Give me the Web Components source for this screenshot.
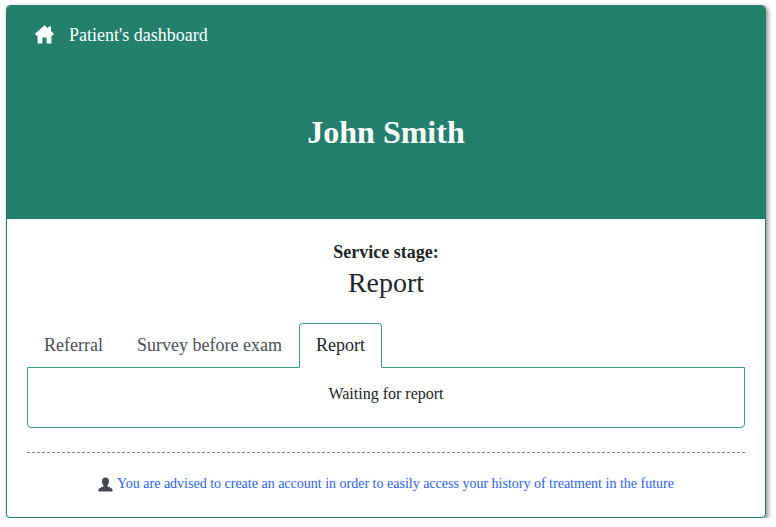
<!DOCTYPE html>
<html>
<head>
<meta charset="utf-8">
<style>
    html, body { margin: 0; background: #fff; }
    body { padding: 5px 10px 0 6px; font-family: "Liberation Serif", "Times New Roman", serif; color: #212529; }
</style>
</head>
<body>
<patient-dashboard>
    <dashboard-header slot="header" title-text="Patient's dashboard">John Smith</dashboard-header>
    <service-stage slot="stage" label="Service stage:">Report</service-stage>
    <stage-tabs slot="tabs" active="Report" items="Referral|Survey before exam|Report">Waiting for report</stage-tabs>
    <account-note slot="note">You are advised to create an account in order to easily access your history of treatment in the future</account-note>
</patient-dashboard>

<script>
class PatientDashboard extends HTMLElement {
    constructor() {
        super();
        this.attachShadow({ mode: 'open' });
    }

    static get styles() {
        return `
            :host {
                display: block;
                height: 513px;
                box-sizing: border-box;
                border: 1px solid #22806d;
                border-radius: 4px;
                background: #fff;
                box-shadow: 2px 2px 5px rgba(0, 0, 0, .45);
                overflow: hidden;
            }
            .body {
                padding: 21px 20px 0;
            }
        `;
    }

    connectedCallback() {
        this.shadowRoot.innerHTML = /* html */`
        <style>${PatientDashboard.styles}</style>
        <slot name="header"></slot>
        <div class="body">
            <slot name="stage"></slot>
            <slot name="tabs"></slot>
            <slot name="note"></slot>
        </div>
        `;
    }
}

class DashboardHeader extends HTMLElement {
    constructor() {
        super();
        this.attachShadow({ mode: 'open' });
    }

    static get styles() {
        return `
            :host {
                display: block;
                height: 213px;
                background: #22806d;
                color: #fff;
            }
            .nav {
                display: flex;
                align-items: center;
                gap: 15px;
                height: 58px;
                padding-left: 28px;
                font-size: 18px;
            }
            svg { width: 19px; height: 19px; display: block; fill: #fff; margin-top: -2px; }
            h1 {
                margin: 49px 0 0;
                text-align: center;
                font-size: 32px;
                line-height: 38px;
                font-weight: 700;
            }
        `;
    }

    connectedCallback() {
        this.shadowRoot.innerHTML = /* html */`
        <style>${DashboardHeader.styles}</style>
        <div class="nav">
            <svg viewBox="0 0 19 19"><path d="M9.5 .3 13.2 3.5V1.6H16V6L19 8.8 17.9 10.4H16.4V18.6H11.6V12.4H7.4V18.6H2.6V10.4H1.1L0 8.8Z"/></svg>
            <span>${this.getAttribute('title-text')}</span>
        </div>
        <h1><slot></slot></h1>
        `;
    }
}

class ServiceStage extends HTMLElement {
    constructor() {
        super();
        this.attachShadow({ mode: 'open' });
    }

    static get styles() {
        return `
            :host {
                display: block;
                text-align: center;
            }
            .label { font-size: 18px; line-height: 24px; font-weight: 700; }
            .value { font-size: 28px; line-height: 36px; margin-top: 1px; }
        `;
    }

    connectedCallback() {
        this.shadowRoot.innerHTML = /* html */`
        <style>${ServiceStage.styles}</style>
        <div class="label">${this.getAttribute('label')}</div>
        <div class="value"><slot></slot></div>
        `;
    }
}

class StageTabs extends HTMLElement {
    constructor() {
        super();
        this.attachShadow({ mode: 'open' });
    }

    static get styles() {
        return `
            :host {
                display: block;
                margin-top: 22px;
            }
            .tabs {
                display: flex;
                height: 44px;
                font-size: 18px;
                position: relative;
                z-index: 1;
            }
            .tab {
                box-sizing: border-box;
                height: 45px;
                padding: 9px 16px 0;
                line-height: 24px;
                color: #495057;
                border: 1px solid transparent;
            }
            .tab.active {
                color: #212529;
                background: #fff;
                border-color: #3f9c88;
                border-bottom-color: #fff;
                border-radius: 4px 4px 0 0;
            }
            .panel {
                box-sizing: border-box;
                height: 61px;
                border: 1px solid #3f9c88;
                border-radius: 0 0 4px 4px;
                padding-top: 16px;
                text-align: center;
                font-size: 16px;
                line-height: 20px;
            }
        `;
    }

    connectedCallback() {
        const active = this.getAttribute('active');
        const tabs = this.getAttribute('items').split('|')
            .map(name => `<div class="tab ${name === active ? 'active' : ''}">${name}</div>`)
            .join('');
        this.shadowRoot.innerHTML = /* html */`
        <style>${StageTabs.styles}</style>
        <div class="tabs">${tabs}</div>
        <div class="panel"><slot></slot></div>
        `;
    }
}

class AccountNote extends HTMLElement {
    constructor() {
        super();
        this.attachShadow({ mode: 'open' });
    }

    static get styles() {
        return `
            :host {
                display: block;
                margin-top: 24px;
                border-top: 1px dashed #808080;
                padding-top: 21px;
            }
            .row {
                display: flex;
                justify-content: center;
                align-items: center;
                gap: 4px;
                font-size: 14px;
                line-height: 20px;
                color: #2962ff;
            }
            svg { width: 15px; height: 15px; display: block; fill: #454a50; }
        `;
    }

    connectedCallback() {
        this.shadowRoot.innerHTML = /* html */`
        <style>${AccountNote.styles}</style>
        <div class="row">
            <svg viewBox="0 0 15 15"><path d="M7.5 0.5 C9.8 0.5 11 2.2 11 4.3 C11 6 10.3 7.4 9.5 8.2 V9.4 C11.5 10.2 14.5 10.8 14.5 12.8 V14.5 H0.5 V12.8 C0.5 10.8 3.5 10.2 5.5 9.4 V8.2 C4.7 7.4 4 6 4 4.3 C4 2.2 5.2 0.5 7.5 0.5 Z"/></svg>
            <span><slot></slot></span>
        </div>
        `;
    }
}

customElements.define('patient-dashboard', PatientDashboard);
customElements.define('dashboard-header', DashboardHeader);
customElements.define('service-stage', ServiceStage);
customElements.define('stage-tabs', StageTabs);
customElements.define('account-note', AccountNote);
</script>
</body>
</html>
